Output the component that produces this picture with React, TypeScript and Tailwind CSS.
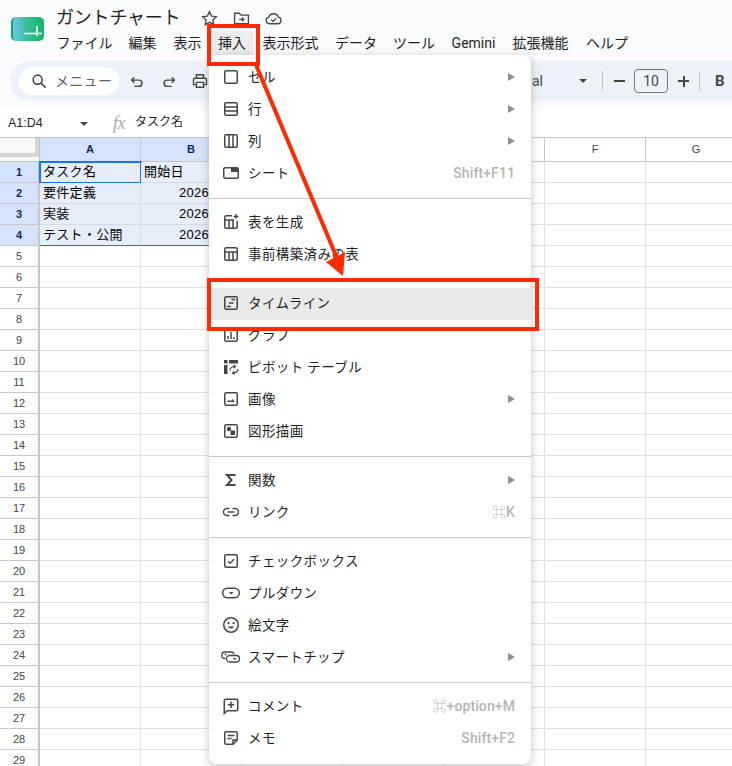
import type { ReactNode } from 'react';

const font = { fontFamily: 'Roboto, "Noto Sans CJK JP", sans-serif' };
const sheetFont = { fontFamily: '"Liberation Sans", "Noto Sans CJK JP", sans-serif' };

type MenuRow = {
  label: string;
  icon: ReactNode;
  sub?: boolean;
  shortcut?: string;
  active?: boolean;
};

// small helper so every menu icon shares the same box
function Ico({ children }: { children: ReactNode }) {
  return (
    <svg viewBox="0 0 20 20" className="h-5 w-5 shrink-0 text-[#444746]" fill="none" stroke="currentColor" strokeWidth="1.5">
      {children}
    </svg>
  );
}

const box = <rect x="3.75" y="3.75" width="12.5" height="12.5" rx="1.5" />;

const groups: MenuRow[][] = [
  [
    { label: 'セル', sub: true, icon: <Ico>{box}</Ico> },
    { label: '行', sub: true, icon: <Ico>{box}<path d="M4 8h12M4 12h12" /></Ico> },
    { label: '列', sub: true, icon: <Ico>{box}<path d="M8 4v12M12 4v12" /></Ico> },
    {
      label: 'シート',
      shortcut: 'Shift+F11',
      icon: (
        <Ico>
          <rect x="2.75" y="4.75" width="14.5" height="10.5" rx="1.5" />
          <rect x="10" y="5" width="7" height="4" fill="currentColor" stroke="none" />
        </Ico>
      ),
    },
  ],
  [
    {
      label: '表を生成',
      icon: (
        <Ico>
          <path d="M11 3.75H5.25a1.5 1.5 0 0 0-1.5 1.5v9.5a1.5 1.5 0 0 0 1.5 1.500h9.500a1.500 1.500 0 0 0 1.500-1.500V9M4 8h9M8 8v8M12 8v8" />
          <path d="M15 1.5l.9 2.1 2.1.9-2.1.9-.9 2.1-.9-2.1-2.1-.9 2.1-.9z" fill="currentColor" stroke="none" />
        </Ico>
      ),
    },
    { label: '事前構築済みの表', icon: <Ico>{box}<path d="M4 8h12M8 8v8M12 8v8" /></Ico> },
  ],
  [
    {
      label: 'タイムライン',
      active: true,
      icon: <Ico>{box}<path d="M5.800 13.500h4M8 10h4.500M10.500 6.500h3.700" /></Ico>,
    },
    {
      label: 'グラフ',
      icon: <Ico>{box}<path d="M7 14v-3M10 14V7M13 14v-2" /></Ico>,
    },
    {
      label: 'ピボット テーブル',
      icon: (
        <Ico>
          <path d="M3 3h3.5v3.5H3zM8 3h9v3.5H8zM3 8h3.5v9H3z" fill="currentColor" stroke="none" />
          <path d="M9 13.5c0-2.5 2-4 5-4M12.5 8l2 1.5-2 1.5M17 12c0 2.5-2 4-5 4M13.5 14.5l-2 1.5 2 1.5" strokeWidth="1.2" />
        </Ico>
      ),
    },
    {
      label: '画像',
      sub: true,
      icon: <Ico>{box}<path d="M6 13l2-2.2 1.6 1.4L11.5 10 14 13z" fill="currentColor" stroke="none" /></Ico>,
    },
    {
      label: '図形描画',
      icon: (
        <Ico>
          {box}
          <circle cx="8" cy="8" r="2.2" fill="currentColor" stroke="none" />
          <rect x="9.5" y="9.5" width="4.5" height="4.5" fill="currentColor" stroke="none" />
        </Ico>
      ),
    },
  ],
  [
    { label: '関数', sub: true, icon: <Ico><path d="M14.5 5H6l4.5 5L6 15h8.5" strokeWidth="2" /></Ico> },
    {
      label: 'リンク',
      shortcut: '⌘K',
      icon: (
        <Ico>
          <path d="M8.5 6.5H6a3.5 3.5 0 0 0 0 7h2.5M11.5 6.5H14a3.5 3.5 0 0 1 0 7h-2.5M6.5 10h7" />
        </Ico>
      ),
    },
  ],
  [
    { label: 'チェックボックス', icon: <Ico>{box}<path d="M7 10.2l2.1 2.1L13.2 8" strokeWidth="1.3" /></Ico> },
    {
      label: 'プルダウン',
      icon: (
        <Ico>
          <rect x="1.75" y="5.25" width="16.5" height="9.5" rx="4.75" />
          <path d="M8 9h4.5l-2.25 2.4z" fill="currentColor" stroke="none" />
        </Ico>
      ),
    },
    {
      label: '絵文字',
      icon: (
        <Ico>
          <circle cx="10" cy="10" r="7.25" />
          <circle cx="7.5" cy="8.2" r="1.1" fill="currentColor" stroke="none" />
          <circle cx="12.5" cy="8.2" r="1.1" fill="currentColor" stroke="none" />
          <path d="M6.8 11.6c.7 1.3 1.8 2 3.2 2s2.500-.7 3.200-2z" fill="currentColor" stroke="none" />
        </Ico>
      ),
    },
    {
      label: 'スマートチップ',
      sub: true,
      icon: (
        <Ico>
          <path d="M4.500 11.500H4a2.500 2.500 0 0 1 0-6.500h6.500a2.500 2.500 0 0 1 2.500 2.500" strokeWidth="1.3" />
          <rect x="5.500" y="8.500" width="13" height="6.500" rx="3.250" strokeWidth="1.3" />
          <circle cx="4.500" cy="7.500" r="1" fill="currentColor" stroke="none" />
          <path d="M12 11.750h3.500" strokeWidth="1.300" />
        </Ico>
      ),
    },
  ],
  [
    {
      label: 'コメント',
      shortcut: '⌘+option+M',
      icon: (
        <Ico>
          <path d="M3.250 17.500V4.750a1.500 1.500 0 0 1 1.500-1.500h10.500a1.500 1.500 0 0 1 1.500 1.500v8.500a1.500 1.500 0 0 1-1.500 1.500H6z" />
          <path d="M10 5.500v6.500M6.750 8.750h6.500" />
        </Ico>
      ),
    },
    {
      label: 'メモ',
      shortcut: 'Shift+F2',
      icon: (
        <Ico>
          <path d="M12 16.250H5.250a1.500 1.500 0 0 1-1.500-1.500v-9.500a1.500 1.500 0 0 1 1.500-1.500h9.500a1.500 1.500 0 0 1 1.500 1.500V12z" />
          <path d="M6.500 7.500h7M6.500 10.500h4" />
          <path d="M12 16v-4h4" />
        </Ico>
      ),
    },
  ],
];

const menubar = [
  ['ファイル', 'w-[71px]'],
  ['編集', 'w-[45px]'],
  ['表示', 'w-[45px]'],
  ['挿入', 'w-[44px] rounded-[4px] bg-[#ededed]'],
  ['表示形式', 'w-[73px]'],
  ['データ', 'w-[58px]'],
  ['ツール', 'w-[58px]'],
  ['Gemini', 'w-[61px]'],
  ['拡張機能', 'w-[73px]'],
  ['ヘルプ', 'w-[60px]'],
];

const columns = ['A', 'B', 'C', 'D', 'E', 'F', 'G'];
const rows = Array.from({ length: 29 }, (_, i) => i + 1);

const cellText: Record<string, string> = {
  A1: 'タスク名',
  A2: '要件定義',
  A3: '実装',
  A4: 'テスト・公開',
  B1: '開始日',
  B2: '2026/',
  B3: '2026/',
  B4: '2026/',
};

function TopBar() {
  return (
    <div className="h-[108px] bg-[#f9fbfd]">
      <div className="flex">
        <div className="ml-[11px] mt-[17px] h-[24px] w-[33px] shrink-0 overflow-hidden rounded-[5px] border-l-[2px] border-[#0aa860] bg-gradient-to-r from-[#6cc4f5] via-[#3cbf9a] via-40% to-[#11b466]">
          <svg viewBox="0 0 31 24" className="h-full w-full">
            <path d="M11 16.500h18M24 9v10" stroke="#fff" strokeWidth="1.700" fill="none" />
          </svg>
        </div>
        <div className="ml-[12px] flex-1">
          <div className="flex h-[34px] items-center pt-[2px]">
            <span className="w-[143.500px] text-[18px] leading-6 tracking-[-0.2px] text-[#1f1f1f]">ガントチャート</span>
            <svg viewBox="0 0 20 20" className="h-[19px] w-[19px] text-[#444746]" fill="none" stroke="currentColor" strokeWidth="1.400">
              <path d="M10 2.800l2.200 4.700 5 .6-3.700 3.400 1 5L10 14l-4.500 2.500 1-5L2.800 8.100l5-.6z" />
            </svg>
            <svg viewBox="0 0 20 20" className="ml-[13px] h-[19px] w-[19px] text-[#444746]" fill="none" stroke="currentColor" strokeWidth="1.400">
              <path d="M2.700 15.500v-11h5l1.800 2h7.800v9z" />
              <path d="M7.500 11h5M10.500 9l2 2-2 2" />
            </svg>
            <svg viewBox="0 0 20 20" className="ml-[13px] h-[19px] w-[19px] text-[#444746]" fill="none" stroke="currentColor" strokeWidth="1.400">
              <path d="M5.500 15.500a3.500 3.500 0 0 1-.6-6.900 5.500 5.500 0 0 1 10.300 0 3.500 3.500 0 0 1-.3 6.900z" />
              <path d="M7.500 11l2 2 3.300-3.300" />
            </svg>
          </div>
          <div className="-ml-[7px] -mt-[3px] flex h-[24px] items-center text-[14px] text-[#1f1f1f]">
            {menubar.map(([label, w]) => (
              <div key={label} className={`${w} flex h-full shrink-0 items-center justify-center whitespace-nowrap`}>
                {label}
              </div>
            ))}
          </div>
        </div>
      </div>
      <div className="ml-[10px] mt-[6px] flex h-[40px] items-center rounded-l-[20px] bg-[#edf2fa]">
        <div className="ml-[9px] flex h-[28px] w-[100px] items-center rounded-full bg-white pl-[11px] text-[14px] text-[#5f6368]">
          <svg viewBox="0 0 20 20" className="h-[18px] w-[18px] text-[#444746]" fill="none" stroke="currentColor" strokeWidth="1.800">
            <circle cx="8.500" cy="8.500" r="5" />
            <path d="M12.300 12.300l5 5" />
          </svg>
          <span className="ml-[7px] whitespace-nowrap tracking-[0.3px]">メニュー</span>
        </div>
        <svg viewBox="0 0 20 20" className="ml-[9px] h-[18px] w-[18px] text-[#444746]" fill="none" stroke="currentColor" strokeWidth="1.600">
          <path d="M7 6L4 9l3 3M4 9h8a3.500 3.500 0 0 1 0 7H7" />
        </svg>
        <svg viewBox="0 0 20 20" className="ml-[14px] h-[18px] w-[18px] text-[#444746]" fill="none" stroke="currentColor" strokeWidth="1.600">
          <path d="M13 6l3 3-3 3M16 9H8a3.500 3.500 0 0 0 0 7h5" />
        </svg>
        <svg viewBox="0 0 20 20" className="ml-[13px] h-[18px] w-[18px] text-[#444746]" fill="none" stroke="currentColor" strokeWidth="1.600">
          <path d="M6 7V3h8v4M5 14H2.800V8.500a1.500 1.500 0 0 1 1.500-1.500h11.400a1.500 1.500 0 0 1 1.500 1.500V14H15M6 11.500h8V17H6z" />
        </svg>
        <div className="ml-[323px] w-[12px] text-[14px] text-[#444746]">al</div>
        <div className="ml-[35px] h-0 w-0 border-x-[4px] border-t-[4px] border-x-transparent border-t-[#444746]" />
        <div className="ml-[15px] h-[20px] w-px bg-[#c7c7c7]" />
        <div className="ml-[11px] h-[2px] w-[11px] bg-[#444746]" />
        <div className="ml-[9px] flex h-[24px] w-[34px] items-center justify-center rounded-[4px] border border-[#747775] text-[14px] text-[#444746]">
          10
        </div>
        <div className="relative ml-[10px] h-[11px] w-[11px]">
          <div className="absolute left-0 top-[4.500px] h-[2px] w-[11px] bg-[#444746]" />
          <div className="absolute left-[4.500px] top-0 h-[11px] w-[2px] bg-[#444746]" />
        </div>
        <div className="ml-[10px] h-[20px] w-px bg-[#c7c7c7]" />
        <div className="ml-[15px] text-[15px] font-bold text-[#444746]">B</div>
      </div>
    </div>
  );
}

function FormulaBar() {
  return (
    <div className="flex h-[29px] items-center bg-white text-[12px] text-[#1f1f1f]" style={sheetFont}>
      <span className="ml-[8px] w-[72px] pt-[2px] text-[12.500px]">A1:D4</span>
      <div className="mt-[2px] h-0 w-0 border-x-[4px] border-t-[4px] border-x-transparent border-t-[#444746]" />
      <span className="ml-[25px] text-[18px] italic leading-none tracking-[-0.5px] text-[#a8a8a8]" style={{ fontFamily: '"Liberation Serif", serif' }}>
        fx
      </span>
      <span className="ml-[10px] pb-[1px]">タスク名</span>
    </div>
  );
}

function Grid() {
  return (
    <div className="border-t border-[#c7c7c7]" style={sheetFont}>
      <div className="flex h-[24px] border-b border-[#c7c7c7]">
        <div className="h-full w-[40px] shrink-0 border-r border-[#c7c7c7] bg-[#f8f9fa]">
          <div className="h-[19px] w-[39px] border-b-[4px] border-r-[4px] border-[#d6d6d6]" />
        </div>
        {columns.map((c, i) => (
          <div
            key={c}
            className={`flex w-[101px] shrink-0 items-center justify-center border-r border-[#c7c7c7] text-[11px] ${
              i < 4 ? 'bg-[#d3e3fd] font-bold text-[#0b2a5b]' : 'text-[#444746]'
            }`}
          >
            {c}
          </div>
        ))}
      </div>
      {rows.map((r) => (
        <div key={r} className="flex h-[21px]">
          <div
            className={`flex w-[40px] shrink-0 items-center justify-center border-b border-r-[2px] border-[#c7c7c7] text-[11px] ${
              r <= 4 ? 'bg-[#d3e3fd] font-bold text-[#0b2a5b]' : 'text-[#444746]'
            }`}
          >
            {r}
          </div>
          {columns.map((c, i) => {
            const inRange = r <= 4 && i < 4;
            const text = cellText[`${c}${r}`];
            const numeric = c === 'B' && r > 1;
            let tone = 'border-[#e1e1e1]';
            if (inRange) tone = r === 4 ? 'bg-[#e7eefb] border-r-[#d5dbe6] border-b-[#1a73e8]' : 'bg-[#e7eefb] border-[#d5dbe6]';
            return (
              <div
                key={c}
                className={`flex w-[101px] shrink-0 items-center overflow-hidden whitespace-nowrap border-b border-r px-[3px] text-[13px] tracking-[0.3px] text-black ${tone} ${
                  numeric ? 'pl-[38px]' : ''
                } ${c === 'A' && r === 1 ? 'outline outline-2 -outline-offset-1 outline-[#1a73e8]' : ''}`}
              >
                {text}
              </div>
            );
          })}
        </div>
      ))}
    </div>
  );
}

function InsertMenu() {
  return (
    <div className="absolute left-[209px] top-[55px] w-[322px] rounded-[8px] bg-white pb-[9px] pt-[7px] text-[13.500px] text-[#1f1f1f] shadow-[0_2px_10px_rgba(60,64,67,0.3)]">
      {groups.map((group, gi) => (
        <div key={gi}>
          {gi > 0 && <div className="my-2 h-px bg-[#c7c7c7]" />}
          {group.map((item) => (
            <div key={item.label} className={`flex h-[32px] items-center pb-[2px] pl-[12px] pr-[16px] ${item.active ? 'bg-[#e9e9e9]' : ''}`}>
              <span className="flex w-[27px]">{item.icon}</span>
              <span className="flex-1 whitespace-nowrap tracking-[0.4px]">{item.label}</span>
              {item.shortcut && <span className="text-[14px] font-medium tracking-[0.1px] text-[#b4b4b4]">{item.shortcut}</span>}
              {item.sub && <span className="h-0 w-0 border-y-[4px] border-l-[7px] border-y-transparent border-l-[#8f8f8f]" />}
            </div>
          ))}
        </div>
      ))}
    </div>
  );
}

export default function App() {
  return (
    <div className="relative h-[766px] w-[732px] overflow-hidden bg-white" style={font}>
      <TopBar />
      <FormulaBar />
      <Grid />
      <InsertMenu />
      {/* red annotations */}
      <div className="absolute left-[207px] top-[24px] h-[42px] w-[53px] border-4 border-[#ff2a00]" />
      <div className="absolute left-[207px] top-[278px] h-[53px] w-[332px] border-4 border-[#ff2a00]" />
      <svg className="absolute inset-0 h-[766px] w-[732px]" viewBox="0 0 732 766">
        <path d="M256 65L337 258" stroke="#ff2a00" strokeWidth="4" fill="none" />
        <path d="M343 276L326 262L345 252z" fill="#ff2a00" />
      </svg>
    </div>
  );
}
